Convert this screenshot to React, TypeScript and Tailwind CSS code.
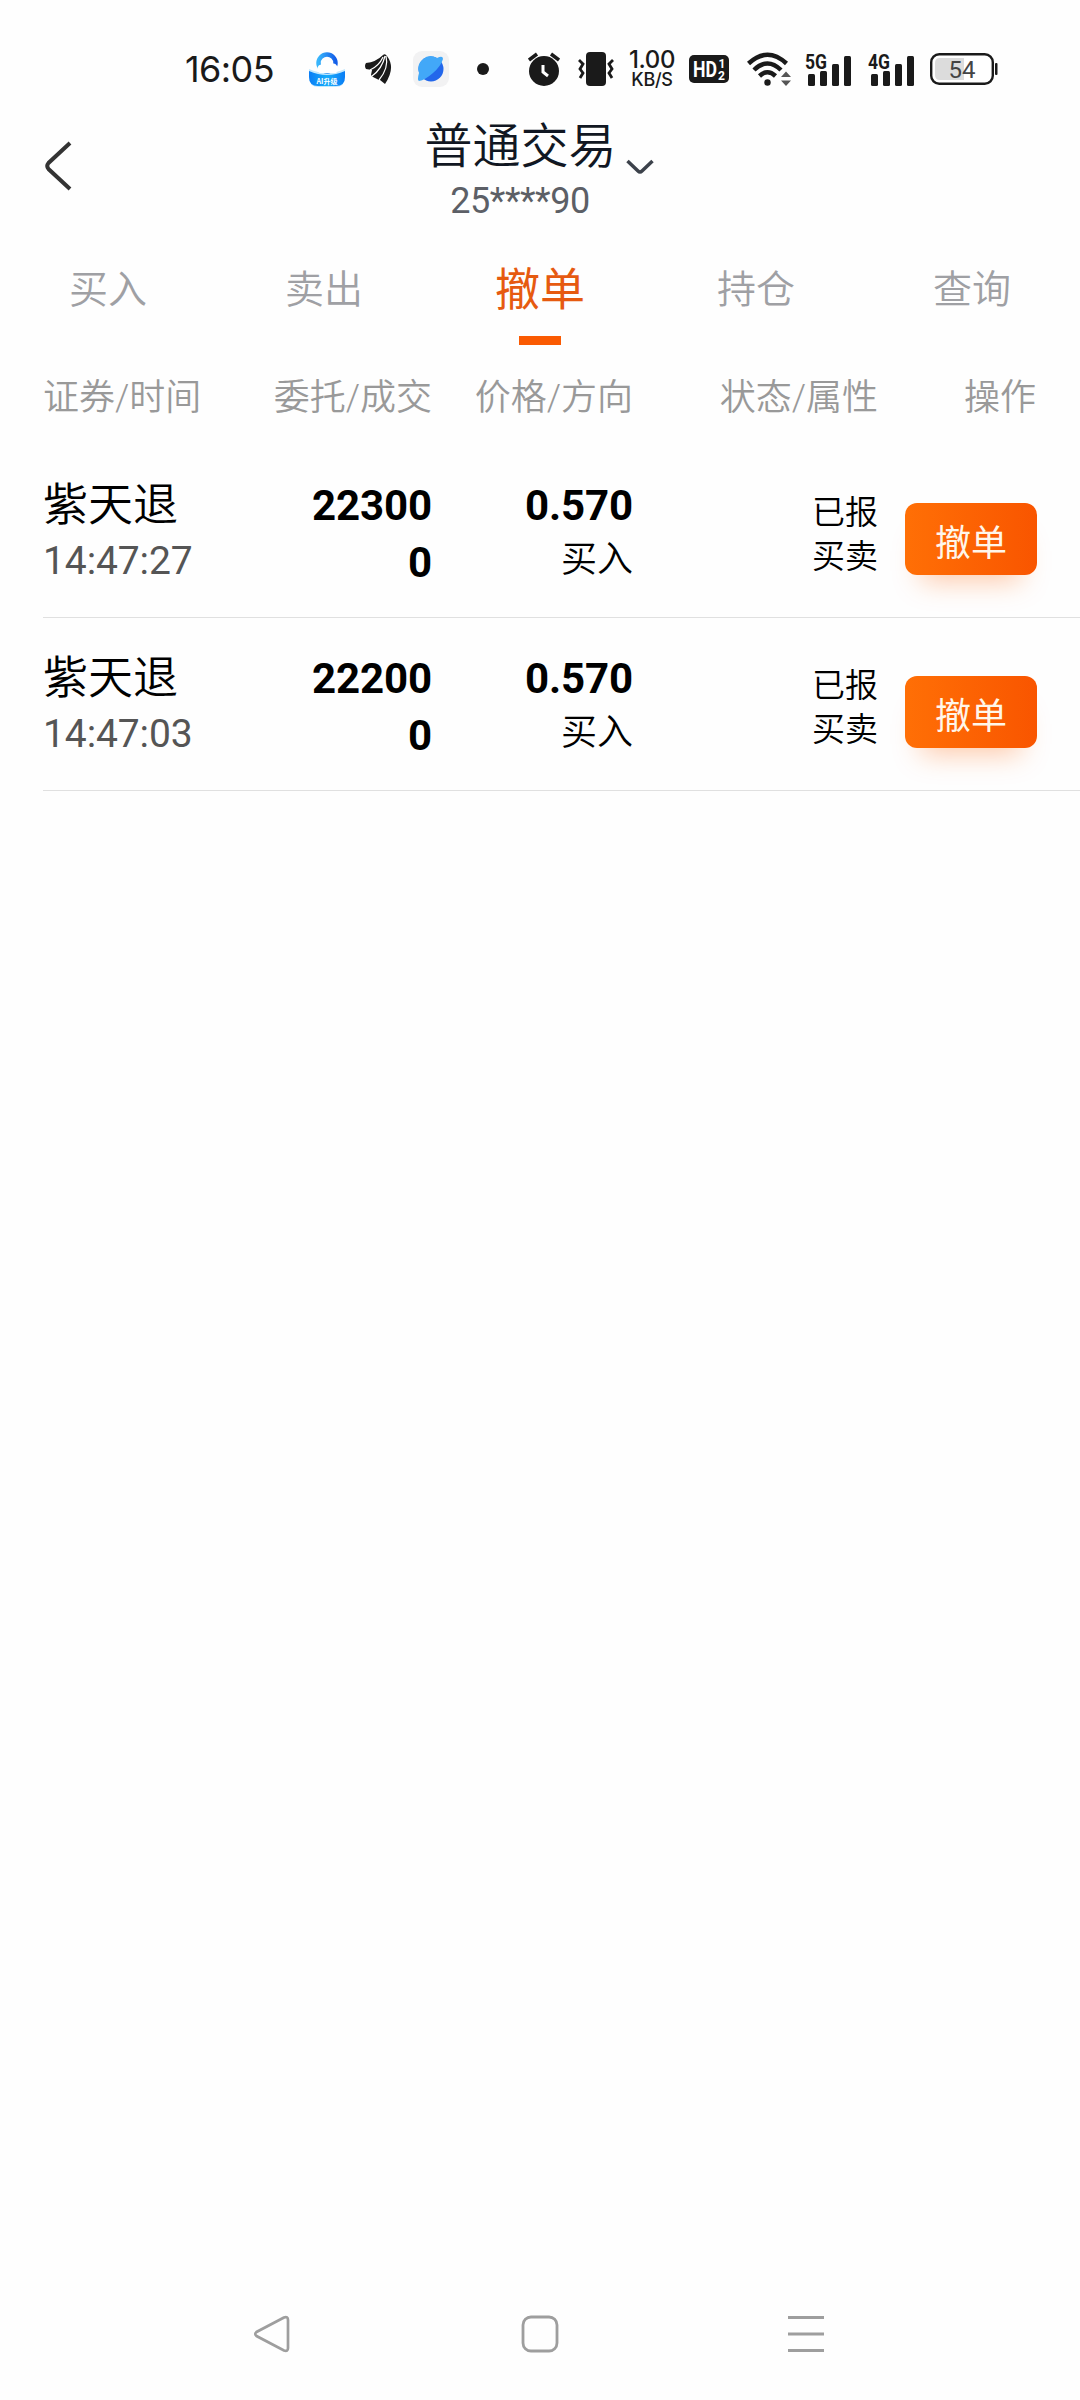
const tabs = ['买入', '卖出', '撤单', '持仓', '查询'];

const orders = [
  { name: '紫天退', time: '14:47:27', amount: '22300', filled: '0', price: '0.570', side: '买入', status: '已报', kind: '买卖' },
  { name: '紫天退', time: '14:47:03', amount: '22200', filled: '0', price: '0.570', side: '买入', status: '已报', kind: '买卖' },
];

function CloudIcon() {
  return (
    <svg width="36" height="36" viewBox="0 0 36 36" className="ml-9 shrink-0">
      <defs>
        <linearGradient id="ring" x1="0" x2="1">
          <stop offset="0" stopColor="#38b5fb" />
          <stop offset="1" stopColor="#145ee8" />
        </linearGradient>
        <linearGradient id="base" x1="0" x2="1">
          <stop offset="0" stopColor="#0a7df5" />
          <stop offset=".5" stopColor="#18adfb" />
          <stop offset="1" stopColor="#0a7df5" />
        </linearGradient>
      </defs>
      <path d="M0 18Q9 22 18 22T36 18V26Q36 36 26 36H10Q0 36 0 26Z" fill="#c3e8fd" />
      <path d="M0 20Q9 24 18 24T36 20V26Q36 35 27 35H9Q0 35 0 26Z" fill="url(#base)" />
      <circle cx="18" cy="12" r="8.500" fill="none" stroke="url(#ring)" strokeWidth="4.500" />
      <path d="M11 22a4.500 4.500 0 0 1 1-8.500 6 6 0 0 1 10-1 5.500 5.500 0 0 1 5 9.500Z" fill="#fff" />
      <text x="18" y="32.500" textAnchor="middle" fontSize="7" fontWeight="700" fill="#fff" fontFamily="Noto Sans CJK SC">AI升级</text>
    </svg>
  );
}

function FeatherIcon() {
  return (
    <svg width="27" height="31" viewBox="0 0 27 31" className="ml-5 shrink-0">
      <path d="M1 9Q11 8 18 1Q20 -1 22 2Q31 14 20 30L15 26L14 26L8 23L6 21L7 16L1 15Q-1 12 1 9Z" fill="#1a1a1a" />
      <path d="M18 3Q14 12 5 16M20 2Q17 15 7 22M21 2Q24 14 14 26" fill="none" stroke="#fff" strokeWidth="1.200" />
    </svg>
  );
}

function PlanetIcon() {
  return (
    <svg width="36" height="36" viewBox="0 0 36 36" className="ml-[21px] shrink-0">
      <rect width="36" height="36" rx="9" fill="#f2f2f3" />
      <circle cx="18" cy="18" r="12.500" fill="#2367eb" />
      <path d="M6 22A12.500 12.500 0 0 1 24 7Q30 4 30 8Q28 15 20 22T6 30Q4 29 6 22Z" fill="#42a8f8" />
    </svg>
  );
}

function AlarmIcon() {
  return (
    <svg width="32" height="34" viewBox="0 0 32 34" className="ml-[39px] shrink-0">
      <circle cx="16" cy="19" r="15" fill="#1a1a1a" />
      <path d="M1 8 9 2M31 8 23 2" stroke="#1a1a1a" strokeWidth="3.500" />
      <path d="M15 13V20L20 24" fill="none" stroke="#fff" strokeWidth="3" />
    </svg>
  );
}

function VibrateIcon() {
  return (
    <svg width="36" height="34" viewBox="0 0 36 34" className="ml-[18px] shrink-0">
      <rect x="8" y="0" width="20" height="34" rx="4" fill="#1a1a1a" />
      <path d="M1 8 5 12 2 17 5 21 2 26M35 8 31 12 34 17 31 21 34 26" fill="none" stroke="#1a1a1a" strokeWidth="2.800" />
    </svg>
  );
}

function HdIcon() {
  return (
    <svg width="40" height="28" viewBox="0 0 40 28" className="ml-[13px] shrink-0" fontFamily="Roboto" fontWeight="700" fill="#fff">
      <rect width="40" height="28" rx="5" fill="#1a1a1a" />
      <text x="4" y="22" fontSize="22" textLength="24" lengthAdjust="spacingAndGlyphs">HD</text>
      <text x="29.500" y="13" fontSize="12">1</text>
      <text x="29" y="25" fontSize="12">2</text>
    </svg>
  );
}

function WifiIcon() {
  return (
    <svg width="45" height="34" viewBox="0 0 45 34" className="ml-[18px] shrink-0">
      <g fill="none" stroke="#1a1a1a" strokeWidth="4.500">
        <path d="M1.500 11.500Q20.500 -6 39.500 11.500" />
        <path d="M7 18Q20.500 5 34 18" />
        <path d="M12.500 24Q20.500 16.500 28.500 24" />
      </g>
      <circle cx="20.500" cy="30.500" r="3.200" fill="#1a1a1a" />
      <path d="M34 25H44L39 19.500ZM34 28.500H44L39 34Z" fill="#555" />
    </svg>
  );
}

function SignalIcon({ label }: { label: string }) {
  return (
    <svg width="47" height="41" viewBox="0 -4 47 41" className="shrink-0" fill="#1a1a1a">
      <rect x="3" y="21" width="7" height="12" rx="1.500" />
      <rect x="15" y="18" width="7" height="15" rx="1.500" />
      <rect x="27" y="11" width="7" height="22" rx="1.500" />
      <rect x="39" y="3" width="7" height="30" rx="1.500" />
      <text x="0" y="16" fontSize="20.500" fontWeight="700" fontFamily="Roboto" textLength="22" lengthAdjust="spacingAndGlyphs">{label}</text>
    </svg>
  );
}

function BatteryIcon() {
  return (
    <svg width="68" height="32" viewBox="0 0 68 32" className="ml-[15px] shrink-0">
      <rect x="1.200" y="1.200" width="61.600" height="29.600" rx="8" fill="#fff" stroke="#1a1a1a" strokeWidth="2.400" />
      <path d="M10 5H34V27H10Q5 27 5 22V10Q5 5 10 5Z" fill="#dcdcdc" />
      <rect x="65" y="10" width="2.500" height="12" rx="1" fill="#1a1a1a" />
      <text x="32" y="24.500" textAnchor="middle" fontSize="24" fill="#444" fontFamily="Roboto">54</text>
    </svg>
  );
}

function StatusBar() {
  return (
    <div className="flex h-[110px] items-center pl-[185px] pt-[28px] text-[#1a1a1a]">
      <div className="w-[88px] whitespace-nowrap font-['Inter'] text-[36px] leading-none tracking-[-0.6px]">16:05</div>
      <CloudIcon />
      <FeatherIcon />
      <PlanetIcon />
      <div className="ml-[28px] h-3 w-3 rounded-full bg-[#1a1a1a]" />
      <AlarmIcon />
      <VibrateIcon />
      <div className="ml-[14px] flex w-12 flex-col items-center whitespace-nowrap font-['Inter'] font-medium">
        <span className="text-[24px] leading-[20px] tracking-[-0.4px]">1.00</span>
        <span className="text-[18px] leading-[19px] tracking-[-0.3px]">KB/S</span>
      </div>
      <HdIcon />
      <WifiIcon />
      <div className="ml-[13px] flex gap-4">
        <SignalIcon label="5G" />
        <SignalIcon label="4G" />
      </div>
      <BatteryIcon />
    </div>
  );
}

function Header() {
  return (
    <header className="grid h-[120px] grid-cols-[100px_1fr_140px]">
      <svg width="28" height="50" viewBox="0 0 28 50" className="ml-[44px] mt-[31px]">
        <path d="M26 2 4.500 22Q2 25 4.500 28L26 48" fill="none" stroke="#333" strokeWidth="4" />
      </svg>
      <div className="flex flex-col items-center">
        <div className="flex items-center pl-[38px]">
          <h1 className="pt-0.5 text-[48px] font-[350] leading-[70px] text-[#111722]">普通交易</h1>
          <svg width="28" height="16" viewBox="0 0 28 16" className="ml-[9px] mt-[42px]">
            <path d="M1.500 2 12 12Q14 14 16 12L26.500 2" fill="none" stroke="#3c424b" strokeWidth="3.500" />
          </svg>
        </div>
        <p className="text-[36px] leading-[39px] tracking-[-0.4px] text-[#5c5f66]">25****90</p>
      </div>
    </header>
  );
}

export default function App() {
  return (
    <div className="flex h-[2400px] w-[1080px] flex-col overflow-hidden bg-[#fefefe] font-['Roboto','Noto_Sans_CJK_SC',sans-serif]">
      <StatusBar />
      <Header />
      <nav className="grid h-[115px] grid-cols-5">
        {tabs.map((tab) =>
          tab === '撤单' ? (
            <div key={tab} className="flex flex-col items-center pt-[7px] text-[45px] text-[#e65a10]">
              <span className="h-[99px] leading-[108px]">{tab}</span>
              <span className="h-[9px] w-[42px] bg-[#fa5a02]" />
            </div>
          ) : (
            <div key={tab} className="pt-[7px] text-center text-[39px] font-[350] leading-[107px] text-[#9fa0a4]">{tab}</div>
          )
        )}
      </nav>
      <main>
        <div className="grid h-[100px] grid-cols-[189px_200px_201px_245px_158px] pl-[43px] text-right text-[36px] font-[350] leading-[106px] text-[#999]">
          <span className="whitespace-nowrap text-left">证券/时间</span>
          <span>委托/成交</span>
          <span>价格/方向</span>
          <span>状态/属性</span>
          <span>操作</span>
        </div>
        {orders.map((order) => (
          <div
            key={order.time}
            className="ml-[43px] grid h-[173px] grid-cols-[189px_200px_201px_245px_159px] border-b border-[#e0e0e0] pt-[32px] text-right text-black"
          >
            <div className="text-left">
              <div className="text-[45px] font-[350] leading-[58px]">{order.name}</div>
              <div className="text-[39px] leading-[52px] tracking-[-0.1px] text-[#555]">{order.time}</div>
            </div>
            <div className="text-[42px] font-bold leading-[57px] tracking-[-0.1px]">
              <div>{order.amount}</div>
              <div>{order.filled}</div>
            </div>
            <div>
              <div className="text-[42px] font-bold leading-[57px] tracking-[-0.1px]">{order.price}</div>
              <div className="text-[36px] font-[350] leading-[53px]">{order.side}</div>
            </div>
            <div className="pt-[14px] text-[33px] font-[350] leading-[44px]">
              <div>{order.status}</div>
              <div>{order.kind}</div>
            </div>
            <button className="ml-[27px] mt-[26px] h-[72px] w-[132px] rounded-xl bg-linear-to-r from-[#ff6f06] to-[#f95500] text-[36px] leading-[82px] text-[#fff6ea] shadow-[0_22px_28px_-16px_rgba(255,100,10,0.35)]">
              撤单
            </button>
          </div>
        ))}
      </main>
      <footer className="mt-auto flex h-[85px] items-start justify-between pl-[253px] pr-[255px]">
        <svg width="37" height="38" viewBox="0 0 37 38" fill="none" stroke="#9e9e9e" strokeWidth="2.700">
          <path d="M31 2.500 3.500 17Q1 19 3.500 21L31 35.500Q35 37 35 33V5Q35 1 31 2.500Z" />
        </svg>
        <svg width="38" height="38" viewBox="0 0 38 38" fill="none" stroke="#9e9e9e" strokeWidth="2.800" className="ml-0.5">
          <rect x="2" y="2" width="34" height="34" rx="8" />
        </svg>
        <svg width="37" height="38" viewBox="0 0 37 38" stroke="#9e9e9e" strokeWidth="3">
          <path d="M0 2.500H36M0 19H36M0 35.500H36" />
        </svg>
      </footer>
    </div>
  );
}
